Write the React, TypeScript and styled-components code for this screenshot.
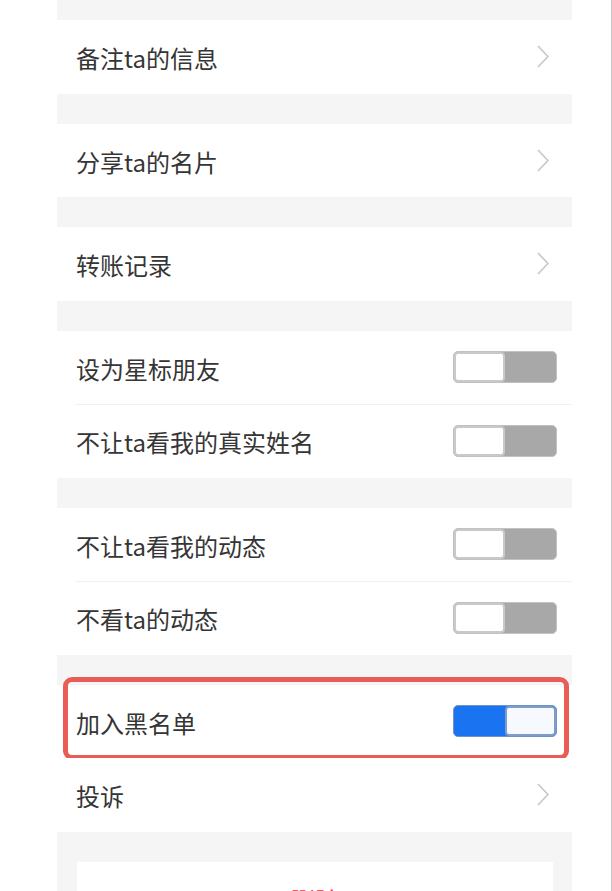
import React from "react";
import styled, { createGlobalStyle } from "styled-components";

const Global = createGlobalStyle`
  html, body { margin: 0; padding: 0; background: #ffffff; }
  body { font-family: "Noto Sans CJK SC", "Noto Sans", sans-serif; }
  * { box-sizing: border-box; }
`;

const Page = styled.div`
  width: 612px;
  min-height: 891px;
  padding: 0 39px 0 57px;
  border-right: 1px solid #c4c4c4;
  background: #ffffff;
`;

const Panel = styled.div`
  background: #f5f5f5;
  padding-top: 20px;
  display: flex;
  flex-direction: column;
`;

const Group = styled.div`
  display: flex;
  flex-direction: column;
  background: #ffffff;
  & + & { margin-top: 30px; }
`;

const Row = styled.div<{ $divider?: boolean }>`
  position: relative;
  height: 73.5px;
  display: flex;
  align-items: center;
  justify-content: space-between;
  padding: 0 15px 0 19px;
  background: #ffffff;
  ${(p) =>
    p.$divider
      ? `&::before { content: ""; position: absolute; top: 0; left: 18px; right: 0; height: 1px; background: #f1f1f1; }`
      : ""}
`;

const Label = styled.span`
  font-family: "Noto Sans CJK SC", "Noto Sans", sans-serif;
  font-size: 24px;
  line-height: 1;
  color: #353535;
  padding-top: 3px;
`;

const Chevron = styled.svg`
  width: 12px;
  height: 23px;
  margin-right: 8px;
  flex: none;
`;

const Track = styled.div<{ $on?: boolean }>`
  width: 104px;
  height: 32px;
  border-radius: 5px;
  display: flex;
  justify-content: ${(p) => (p.$on ? "flex-end" : "flex-start")};
  background: ${(p) => (p.$on ? "#1a74f2" : "#a8a8a8")};
  border: 1px solid ${(p) => (p.$on ? "#6d93c9" : "#c2c2c2")};
  flex: none;
`;

const Knob = styled.div<{ $on?: boolean }>`
  width: 51px;
  height: 100%;
  border-radius: 4px;
  background: ${(p) => (p.$on ? "#f6faff" : "#ffffff")};
  border: 2px solid ${(p) => (p.$on ? "#7f9cc6" : "#c9c9c9")};
`;

const Highlight = styled.div`
  position: absolute;
  top: -8px;
  bottom: -2px;
  left: 6px;
  right: 3px;
  border: 5px solid #ea5d57;
  border-radius: 9px;
  pointer-events: none;
`;

const DeleteCard = styled.div`
  margin: 30px 19px 0 20px;
  height: 70px;
  background: #ffffff;
  display: flex;
  align-items: center;
  justify-content: center;
  font-family: "Noto Sans CJK SC", "Noto Sans", sans-serif;
  font-size: 25px;
  color: #e5393f;
  padding-top: 6px;
`;

const Arrow = () => (
  <Chevron viewBox="0 0 12 23">
    <path d="M1 1 L11 11.5 L1 22" fill="none" stroke="#c6c6c6" strokeWidth="1.6" />
  </Chevron>
);

const Toggle = ({ on }: { on?: boolean }) => (
  <Track $on={on}>
    <Knob $on={on} />
  </Track>
);

export default function App() {
  return (
    <>
      <Global />
      <Page>
        <Panel>
          <Group>
            <Row>
              <Label>备注ta的信息</Label>
              <Arrow />
            </Row>
          </Group>
          <Group>
            <Row>
              <Label>分享ta的名片</Label>
              <Arrow />
            </Row>
          </Group>
          <Group>
            <Row>
              <Label>转账记录</Label>
              <Arrow />
            </Row>
          </Group>
          <Group>
            <Row>
              <Label>设为星标朋友</Label>
              <Toggle />
            </Row>
            <Row $divider>
              <Label>不让ta看我的真实姓名</Label>
              <Toggle />
            </Row>
          </Group>
          <Group>
            <Row>
              <Label>不让ta看我的动态</Label>
              <Toggle />
            </Row>
            <Row $divider>
              <Label>不看ta的动态</Label>
              <Toggle />
            </Row>
          </Group>
          <Group>
            <Row>
              <Label>加入黑名单</Label>
              <Toggle on />
              <Highlight />
            </Row>
            <Row>
              <Label>投诉</Label>
              <Arrow />
            </Row>
          </Group>
          <DeleteCard>删除</DeleteCard>
        </Panel>
      </Page>
    </>
  );
}
